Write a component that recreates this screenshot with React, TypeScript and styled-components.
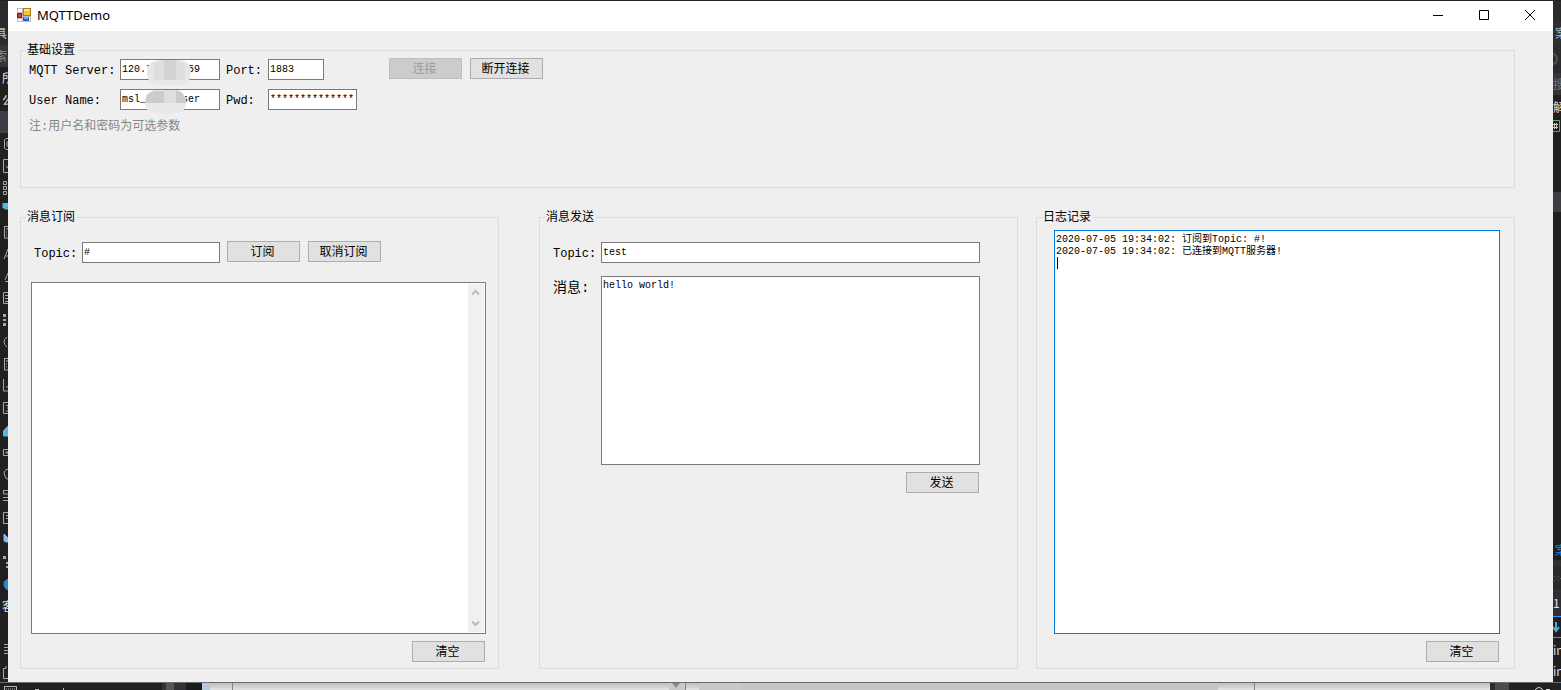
import React from "react";
import styled, { createGlobalStyle, css } from "styled-components";

const mono = `"Liberation Mono", "Noto Sans CJK SC", monospace`;
const cjk = `"Noto Sans CJK SC", sans-serif`;

const GlobalStyle = createGlobalStyle`
  *, *::before, *::after { box-sizing: border-box; }
  body { margin: 0; background: #202021; color: #000; font: 12px/14px ${cjk}; }
`;

const Desktop = styled.div`
  display: grid;
  grid-template-columns: 8px minmax(0, 1fr) 8px;
  grid-template-rows: minmax(0, 1fr) 8px;
  min-height: 100vh;
  padding-top: 1px;
  background: #202021;
  overflow: hidden;
`;

const Strip = styled.div`
  display: flex;
  flex-direction: column;
  overflow: hidden;
  color: #b8b8b8;
`;

const StripRow = styled.div<{ $h?: number; $bg?: string; $color?: string; $start?: boolean }>`
  flex: none;
  display: flex;
  align-items: center;
  height: ${(p) => p.$h ?? 22}px;
  padding-left: ${(p) => (p.$start ? 0 : 2)}px;
  background: ${(p) => p.$bg ?? "transparent"};
  color: ${(p) => p.$color ?? "inherit"};
  white-space: nowrap;
  svg { flex: none; }
`;

const FarText = styled.span<{ $shift?: number }>`
  margin-left: ${(p) => -(p.$shift ?? 0)}px;
`;

const BottomStrip = styled.div`
  grid-column: 1 / -1;
  display: flex;
  overflow: hidden;
  border-top: 1px solid #6b6b6b;
  background: linear-gradient(#bdbdbd, #e2e2e2);
`;

const Slice = styled.div<{ $w?: number; $grow?: number; $bg?: string; $line?: boolean }>`
  flex: ${(p) => (p.$grow ? `${p.$grow} 1 0` : "none")};
  width: ${(p) => (p.$w ? `${p.$w}px` : "auto")};
  background: ${(p) => p.$bg ?? "transparent"};
  border-right: ${(p) => (p.$line ? "1px solid #858585" : "0")};
  overflow: hidden;
  svg { display: block; }
`;

const Window = styled.main`
  display: flex;
  flex-direction: column;
  background: #efefef;
`;

const TitleBar = styled.header`
  display: flex;
  align-items: center;
  height: 30px;
  padding: 0 0 2px 9px;
  background: #fff;
`;

const Title = styled.h1`
  flex: 1;
  margin: 0 0 0 6px;
  font: 400 13px/20px "Noto Sans", sans-serif;
`;

const CaptionButton = styled.button`
  display: flex;
  align-items: center;
  justify-content: center;
  width: 46px;
  height: 28px;
  padding: 0;
  border: 0;
  background: transparent;
`;

const Body = styled.div`
  flex: 1;
  display: flex;
  flex-direction: column;
  gap: 22px;
  padding: 12px 38px 13px 12px;
`;

const Columns = styled.div`
  flex: 1;
  display: grid;
  grid-template-columns: minmax(0, 1fr) 40px minmax(0, 1fr) 18px minmax(0, 1fr);
`;

const Group = styled.fieldset<{ $pad: string; $minH?: number }>`
  display: flex;
  flex-direction: column;
  min-width: 0;
  min-height: ${(p) => p.$minH ?? 0}px;
  margin: 0;
  padding: ${(p) => p.$pad};
  border: 1px solid #dcdcdc;
`;

const Legend = styled.legend<{ $indent: number }>`
  margin-left: ${(p) => -p.$indent}px;
  padding: 0 2px 2px 1px;
  font-size: 12px;
  line-height: 12px;
`;

const Row = styled.div<{ $mb?: number; $top?: boolean }>`
  display: flex;
  align-items: ${(p) => (p.$top ? "flex-start" : "center")};
  height: ${(p) => (p.$top ? "auto" : "21px")};
  margin-bottom: ${(p) => p.$mb ?? 0}px;
`;

const Label = styled.label<{ $w: number; $inset?: number; $cjk?: boolean }>`
  flex: none;
  width: ${(p) => p.$w}px;
  padding: 2px 0 0 ${(p) => p.$inset ?? 0}px;
  font-family: ${mono};
  font-size: ${(p) => (p.$cjk ? 14 : 12)}px;
  line-height: 20px;
  white-space: pre;
`;

const field = css`
  border: 1px solid #7a7a7a;
  border-radius: 0;
  outline: 0;
  background: #fff;
  color: #000;
  font-family: ${mono};
  font-size: 10px;
  line-height: 12px;
`;

const TextBox = styled.input<{ $w?: number }>`
  ${field}
  flex: ${(p) => (p.$w ? "none" : "1")};
  width: ${(p) => (p.$w ? `${p.$w}px` : "auto")};
  min-width: 0;
  height: 21px;
  padding: 0 1px 1px;
`;

const TextArea = styled.textarea<{ $h?: number; $focus?: boolean; $bare?: boolean }>`
  ${field}
  display: block;
  flex: 1;
  min-width: 0;
  width: 100%;
  height: ${(p) => (p.$h ? `${p.$h}px` : "auto")};
  padding: 3px 1px;
  resize: none;
  ${(p) => p.$focus && css`border-color: #0078d7;`}
  ${(p) => p.$bare && css`border: 0;`}
`;

const ScrollFrame = styled.div`
  flex: 1;
  display: flex;
  padding: 1px;
  border: 1px solid #7a7a7a;
  background: #fff;
`;

const ScrollBar = styled.div`
  display: flex;
  flex-direction: column;
  justify-content: space-between;
  align-items: center;
  width: 16px;
  padding: 5px 1px 5px 0;
  background: #f0f0f0;
`;

const LogFrame = styled.div`
  flex: 1;
  display: flex;
  position: relative;
`;

const Caret = styled.span`
  position: absolute;
  left: 3px;
  top: 27px;
  width: 1px;
  height: 12px;
  background: #000;
`;

const Button = styled.button<{ $ml?: number; $end?: boolean }>`
  flex: none;
  align-self: ${(p) => (p.$end ? "flex-end" : "auto")};
  width: 73px;
  height: 21px;
  margin: ${(p) => (p.$end ? "7px 1px 0 0" : `0 0 2px ${p.$ml ?? 8}px`)};
  padding: 0 2px 1px 0;
  border: 1px solid #adadad;
  border-radius: 0;
  background: #e1e1e1;
  color: #000;
  font: 12px/14px ${cjk};
  &:disabled {
    border-color: #bfbfbf;
    background: #cccccc;
    color: #9c9c9c;
  }
`;

const Note = styled.p`
  margin: 0;
  color: #868686;
  font: 12px/14px ${mono};
`;

const Masked = styled.div`
  position: relative;
  display: flex;
  margin-right: 6px;
`;

const Blob = styled.svg`
  position: absolute;
  left: 24px;
  top: 0;
  pointer-events: none;
`;

const AppIcon = () => (
  <svg width="14" height="14" viewBox="0 0 14 14" shapeRendering="crispEdges" aria-hidden="true">
    <path d="M0 0h14v14H0z" fill="#bdbdbd" />
    <path d="M1 1h4v3H1zM1 11h4v2H1zM12 9h1v4h-1z" fill="#fff" />
    <path d="M6 0h8v8H6z" fill="#a77b15" />
    <path d="M7 1h6v6H7z" fill="#f6c52e" />
    <path d="M7 1h5v2H7z" fill="#fde58b" />
    <path d="M0 5h5v5H0z" fill="#8e1616" />
    <path d="M1 6h3v3H1z" fill="#d93b2e" />
    <path d="M6 9h6v4H6z" fill="#2b62c9" />
    <path d="M7 9h4v2H7z" fill="#75a8f3" />
  </svg>
);

const Chevron = ({ up }: { up?: boolean }) => (
  <svg width="9" height="7" viewBox="0 0 9 7" fill="none" stroke="#bcbcbc" strokeWidth="2" aria-hidden="true">
    <path d={up ? "M1 5.5 4.5 2 8 5.5" : "M1 1.5 4.5 5 8 1.5"} />
  </svg>
);

// Toolbox glyphs peeking out to the left of the window, one per 22px row.
const toolIcons: { d: string; fill?: string; solid?: boolean }[] = [
  { d: "M8 1.500H6L4.500 3v8L6 12.500h2M8 5H7v4h1" },
  { d: "M8 .5H3.500v13H8M6 7l2 2" },
  { d: "M3.500.5h3v3h-3zM3.500 5.500h3v3h-3zM3.500 10.500h3v3h-3z" },
  { d: "M3 0h5v4H6v1h2v1H5V5H3z", fill: "#5bb6e0" },
  { d: "M4.500 1.500H8M4.500 1v12H8M6 4h2M6 7h1M6 10h1" },
  { d: "M4 12 8 2M6 9h2" },
  { d: "M5 11 8 4M5 12.500h3" },
  { d: "M8 1.500H3.500v11H8M5 4.500h3M5 7.500h3M5 10.500h3" },
  { d: "M3 1h3v3H3zM3 6h3v2H3zM3 10h3v3H3z", solid: true },
  { d: "M7 2Q1 7 7 12" },
  { d: "M4.500 1.500H8M4.500 1v12H8M6 4h2M6 7h1M6 10h1" },
  { d: "M3.500 0v12H8M6 8h2" },
  { d: "M8 1.500H3.500v11H8M6 4.500h2M7 7h1M6 10h2" },
  { d: "M3.500 13V8L6 5l2-2v10z", fill: "#5bb6e0" },
  { d: "M8 4.500H3.500v6H8M6 7h2v1H6z" },
  { d: "M8 2Q3 3 4.500 8T8 12" },
  { d: "M3.500 1.500H8M3.500 1v4H8M3 8.500h5M3 11.500h5" },
  { d: "M8 1.500H3.500v11H8M6 4.500h2M6 7.500h2" },
  { d: "M4 1l4 4v4H6l-2-1z", fill: "#8fb9ec" },
  { d: "M3 1h3v3H3zM6 7h2v2H6zM6 11h2v2H6z", solid: true },
  { d: "M8 2Q3 4 4 8t4 5z", fill: "#268ec7" },
];

const ToolIcon = ({ d, fill, solid }: { d: string; fill?: string; solid?: boolean }) => (
  <svg
    width="8"
    height="14"
    viewBox="0 0 8 14"
    fill={fill ?? (solid ? "#a8a8a8" : "none")}
    stroke={solid ? "none" : fill ?? "#a8a8a8"}
    aria-hidden="true"
  >
    <path d={d} />
  </svg>
);

const LeftStrip = () => (
  <Strip aria-hidden="true">
    <StripRow $h={20} $bg="#2b2b2d" />
    <StripRow $h={24} $bg="#2b2b2d" $color="#c4c4c4" $start><FarText $shift={5}>具</FarText></StripRow>
    <StripRow $h={22} $bg="#343437" $color="#8c8c8c" $start><FarText $shift={5}>索</FarText></StripRow>
    <StripRow $color="#d6e2ee"><FarText>所</FarText></StripRow>
    <StripRow $color="#d6e2ee"><FarText>公</FarText></StripRow>
    <StripRow $bg="#3d3d43" />
    {toolIcons.map((icon, i) => (
      <StripRow key={i} $start><ToolIcon {...icon} /></StripRow>
    ))}
    <StripRow $color="#d6e2ee"><FarText>客</FarText></StripRow>
    <StripRow />
    <StripRow $start><ToolIcon d="M4 1.500h4M4 4.500h4M4 7.500h4M4 10.500h4" /></StripRow>
    <StripRow $h={21} $start><ToolIcon d="M6 3.500H3.500v10H8M6 1v2" /></StripRow>
  </Strip>
);

const RightStrip = () => (
  <Strip aria-hidden="true">
    <StripRow $h={20} $bg="#29292c" />
    <StripRow $h={24} $bg="#2f2f33" $color="#9db3c8"><FarText>案</FarText></StripRow>
    <StripRow $h={28} $bg="#2b2b2e" $start>
      <svg width="8" height="14" viewBox="0 0 8 14" fill="none" stroke="#505052" strokeWidth="2"><path d="M0 2q4 1 4 5t-4 5" /></svg>
    </StripRow>
    <StripRow $h={22} $bg="#343437" $color="#76767a" $start><FarText>搜</FarText></StripRow>
    <StripRow $h={24} $color="#e0d8d0" $start><FarText>解</FarText></StripRow>
    <StripRow $h={14} $start>
      <svg width="8" height="12" viewBox="0 0 8 12" fill="none"><path d="M0 .5h6.500v11H0" stroke="#66a85c" /><path d="M0 4.500h5M0 7.500h5M1.500 3v6M3.500 3v6" stroke="#c8c8c8" /></svg>
    </StripRow>
    <StripRow $h={59} />
    <StripRow $h={20} $bg="#3d3d43" />
    <StripRow $h={328} />
    <StripRow $h={20} $color="#0a84e8"><FarText>案</FarText></StripRow>
    <StripRow $h={7} $bg="#303033" />
    <StripRow $h={22} $bg="#29292b" $start>
      <svg width="8" height="8" viewBox="0 0 8 8" fill="#5a5a5c"><path d="M1 2h1v1H1zM5 2h1v1H5zM3 4h1v1H3zM7 4h1v1H7zM1 6h1v1H1zM5 6h1v1H5z" /></svg>
    </StripRow>
    <StripRow $h={27} $bg="#303034" $color="#e6e6e6" $start><FarText>1</FarText></StripRow>
    <StripRow $h={1} $bg="#3794ff" />
    <StripRow $h={20} $start>
      <svg width="8" height="12" viewBox="0 0 8 12" fill="none" stroke="#55aadd" strokeWidth="2"><path d="M3 1v8M0 6l3 4 3-4" /></svg>
    </StripRow>
    <StripRow $h={1} $bg="#3794ff" />
    <StripRow $h={24} $color="#dedede" $start><FarText>in</FarText></StripRow>
    <StripRow $h={18} $color="#dedede" $start><FarText>in</FarText></StripRow>
  </Strip>
);

const DesktopBottom = () => (
  <BottomStrip aria-hidden="true">
    <Slice $w={162} $bg="#202021">
      <svg width="80" height="7" viewBox="0 0 80 7" fill="none" stroke="#b8b8b8"><path d="M4.500 7V3.500h12V7" /><path d="M6 6h10" strokeDasharray="1 1" /><path d="M35 6.500h4M63.500 5v2" /></svg>
    </Slice>
    <Slice $w={4} $bg="#343437" />
    <Slice $w={8} $bg="#555557" />
    <Slice $w={12} $bg="#303035" />
    <Slice $w={16} $bg="#1b1b1c" />
    <Slice $w={8} $bg="#b9c9dc" />
    <Slice $w={12} />
    <Slice $w={11} $line />
    <Slice $grow={436} />
    <Slice $w={17} $bg="#c9c9c9" $line>
      <svg width="16" height="7" viewBox="0 0 16 7" fill="#8a8a8a"><path d="M3 0h8L7 5z" /></svg>
    </Slice>
    <Slice $w={13} />
    <Slice $w={41} $bg="#c9c9c9" />
    <Slice $grow={478} $bg="#c6c6c6" />
    <Slice $w={37} $line />
    <Slice $grow={235} />
    <Slice $w={5} $bg="#2d2d2f" />
    <Slice $w={14} $bg="#4b4b4d" />
    <Slice $w={52} $bg="#222224">
      <svg width="52" height="7" viewBox="0 0 52 7" fill="none" stroke="#d8d8d8"><path d="M26 7q4-5 8 0M37 6.500h4" /></svg>
    </Slice>
  </BottomStrip>
);

const logText = "2020-07-05 19:34:02: 订阅到Topic: #!\n2020-07-05 19:34:02: 已连接到MQTT服务器!\n";

export default function App() {
  return (
    <Desktop>
      <GlobalStyle />
      <LeftStrip />
      <Window>
        <TitleBar>
          <AppIcon />
          <Title>MQTTDemo</Title>
          <CaptionButton aria-label="最小化">
            <svg width="10" height="10" stroke="#000"><path d="M0 5.500h10" /></svg>
          </CaptionButton>
          <CaptionButton aria-label="最大化">
            <svg width="10" height="10" stroke="#000" fill="none"><path d="M.5.5h9v9h-9z" /></svg>
          </CaptionButton>
          <CaptionButton aria-label="关闭">
            <svg width="10" height="10" stroke="#000" fill="none"><path d="M0 0l10 10M10 0 0 10" /></svg>
          </CaptionButton>
        </TitleBar>
        <Body>
          <Group $pad="2px 8px 0" $minH={145}>
            <Legend $indent={3}>基础设置</Legend>
            <Row $mb={9}>
              <Label $w={91} htmlFor="server">MQTT Server:</Label>
              <Masked>
                <TextBox id="server" $w={100} defaultValue="120.7      59" />
                <Blob width="48" height="28" viewBox="0 0 48 28">
                  <path d="M3 13Q3 1 16 1h20q11 1 11 12t-9 13q-8 2-16 0H12Q3 24 3 13z" fill="#e7e7e7" />
                  <path d="M10 4l10-3v20H10zM32 1l9 4v16h-9z" fill="#dedede" />
                  <path d="M20 1h12v20H20z" fill="#d3d3d3" />
                </Blob>
              </Masked>
              <Label $w={42} htmlFor="port">Port:</Label>
              <TextBox id="port" $w={56} defaultValue="1883" />
              <Button $ml={65} disabled>连接</Button>
              <Button>断开连接</Button>
            </Row>
            <Row $mb={10}>
              <Label $w={91} htmlFor="user">User Name:</Label>
              <Masked>
                <TextBox id="user" $w={100} defaultValue="msl_     user" />
                <Blob width="44" height="26" viewBox="0 0 44 26">
                  <path d="M1 13Q1 2 11 1h22q9 2 9 12t-9 11q-10 2-20 0Q1 24 1 13z" fill="#e9e9e9" />
                  <path d="M1 14Q2 3 10 2h10v12z" fill="#cccccc" />
                  <path d="M20 1h12v13H20z" fill="#dfdfdf" />
                  <path d="M32 1q9 2 10 13H32z" fill="#cbcbcb" />
                </Blob>
              </Masked>
              <Label $w={42} htmlFor="pwd">Pwd:</Label>
              <TextBox id="pwd" $w={89} defaultValue="**************" />
            </Row>
            <Note>注:用户名和密码为可选参数</Note>
          </Group>
          <Columns>
            <Group $pad="18px 12px 6px 10px">
              <Legend $indent={5}>消息订阅</Legend>
              <Row $mb={19}>
                <Label $w={51} $inset={3} htmlFor="subTopic">Topic:</Label>
                <TextBox id="subTopic" $w={138} defaultValue="#" />
                <Button $ml={7}>订阅</Button>
                <Button>取消订阅</Button>
              </Row>
              <ScrollFrame>
                <TextArea $bare aria-label="消息订阅" />
                <ScrollBar aria-hidden="true">
                  <Chevron up />
                  <Chevron />
                </ScrollBar>
              </ScrollFrame>
              <Button $end>清空</Button>
            </Group>
            <span />
            <Group $pad="18px 37px 6px 13px">
              <Legend $indent={8}>消息发送</Legend>
              <Row $mb={13}>
                <Label $w={48} htmlFor="pubTopic">Topic:</Label>
                <TextBox id="pubTopic" defaultValue="test" />
              </Row>
              <Row $top>
                <Label $w={48} $cjk htmlFor="message">消息:</Label>
                <TextArea id="message" $h={189} defaultValue="hello world!" />
              </Row>
              <Button $end>发送</Button>
            </Group>
            <span />
            <Group $pad="6px 14px 6px 17px">
              <Legend $indent={12}>日志记录</Legend>
              <LogFrame>
                <TextArea $focus aria-label="日志记录" defaultValue={logText} />
                <Caret />
              </LogFrame>
              <Button $end>清空</Button>
            </Group>
          </Columns>
        </Body>
      </Window>
      <RightStrip />
      <DesktopBottom />
    </Desktop>
  );
}
